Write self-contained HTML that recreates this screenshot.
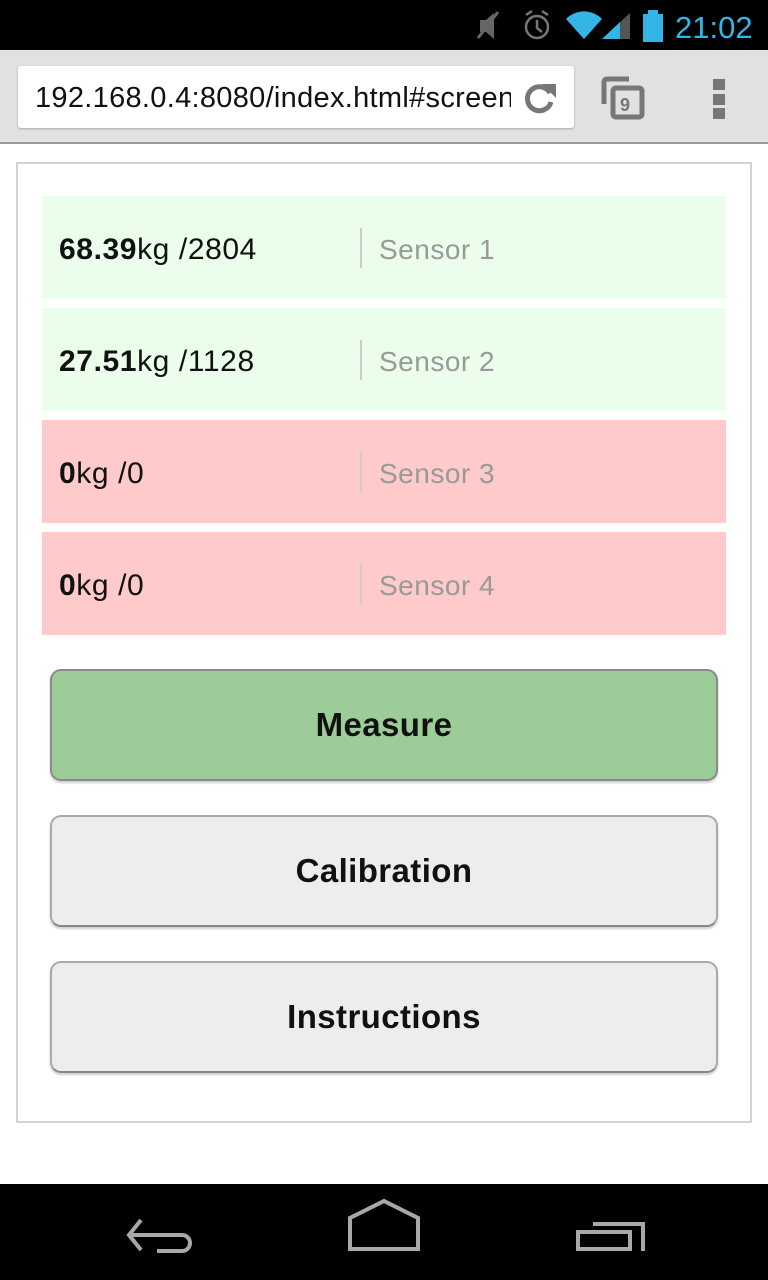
<!DOCTYPE html>
<html><head><style>
*{margin:0;padding:0;box-sizing:border-box}
body{width:768px;height:1280px;position:relative;background:#fff;font-family:"Liberation Sans",sans-serif;overflow:hidden}
.abs{position:absolute}
.row{position:absolute;left:42px;width:684px;height:103px}
.row .v{position:absolute;left:17px;top:2px;line-height:103px;font-size:30px;letter-spacing:0.6px;color:#111}
.row .d{position:absolute;left:318px;top:32px;width:2px;height:40px;background:#ccc}
.row .s{position:absolute;left:337px;top:2px;line-height:103px;font-size:28px;letter-spacing:0.5px;color:#999}
.g{background:#ebfdeb}.r{background:#fecbca}
.btn{position:absolute;left:50px;width:668px;height:112px;border:2px solid #aaa;border-bottom-color:#888;border-radius:11px;background:#ededed;text-align:center;line-height:108px;font-weight:bold;font-size:33px;letter-spacing:0.4px;color:#111;box-shadow:0 2px 2px rgba(0,0,0,.2)}
</style></head><body>
<div class="abs" style="left:0;top:0;width:768px;height:50px;background:#000"></div>
<svg class="abs" style="left:470px;top:6px" width="298" height="40" viewBox="0 0 298 40">
<path d="M10 14h6l8-7v26l-8-7h-6z" fill="#666"/><line x1="8" y1="32" x2="28" y2="6" stroke="#666" stroke-width="3"/>
<circle cx="67" cy="21" r="11" fill="none" stroke="#777" stroke-width="2.5"/><path d="M67 14v8l5 4" stroke="#777" stroke-width="2.5" fill="none"/>
<path d="M56 9l6-4M78 9l-6-4" stroke="#777" stroke-width="2.5"/>
<path d="M96 13a25 25 0 0 1 36 0L114 33z" fill="#33b5e5"/>
<path d="M132 33l28-26v26z" fill="#555"/><path d="M132 33l18-17v17z" fill="#33b5e5"/>
<rect x="173" y="8" width="20" height="28" fill="#33b5e5"/><rect x="178" y="4" width="10" height="4" fill="#33b5e5"/>
<text x="205" y="32" font-family="Liberation Sans" font-size="31" fill="#33b5e5">21:02</text>
</svg>
<div class="abs" style="left:0;top:50px;width:768px;height:94px;background:#e1e1e1;border-bottom:2px solid #9a9a9a"></div>
<div class="abs" style="left:18px;top:66px;width:556px;height:62px;background:#fff;border-radius:3px;box-shadow:0 1px 2px rgba(0,0,0,.25);overflow:hidden">
<div style="position:absolute;left:17px;top:1px;line-height:62px;font-size:29px;letter-spacing:0.3px;color:#111;white-space:nowrap;width:476px;overflow:hidden">192.168.0.4:8080/index.html#screen</div>
<svg style="position:absolute;left:504px;top:14px" width="36" height="36" viewBox="0 0 36 36"><path d="M28 13A12 12 0 1 0 29 22" fill="none" stroke="#777" stroke-width="5"/><path d="M20 4h14v14z" fill="#777"/></svg>
</div>
<svg class="abs" style="left:598px;top:74px" width="52" height="48" viewBox="0 0 52 48"><path d="M6 30V8a3 3 0 0 1 3-3h22" fill="none" stroke="#777" stroke-width="5"/><rect x="15" y="14" width="29" height="29" rx="3" fill="none" stroke="#777" stroke-width="5"/><text x="22" y="37" font-family="Liberation Sans" font-weight="bold" font-size="18" fill="#777">9</text></svg>
<div class="abs" style="left:713px;top:79px;width:12px;height:11px;background:#777"></div>
<div class="abs" style="left:713px;top:94px;width:12px;height:11px;background:#777"></div>
<div class="abs" style="left:713px;top:108px;width:12px;height:11px;background:#777"></div>
<div class="abs" style="left:16px;top:162px;width:736px;height:961px;border:2px solid #d4d4d4"></div>
<div class="row g" style="top:196px"><div class="v"><b>68.39</b>kg /2804</div><div class="d"></div><div class="s">Sensor 1</div></div>
<div class="row g" style="top:308px"><div class="v"><b>27.51</b>kg /1128</div><div class="d"></div><div class="s">Sensor 2</div></div>
<div class="row r" style="top:420px"><div class="v"><b>0</b>kg /0</div><div class="d"></div><div class="s">Sensor 3</div></div>
<div class="row r" style="top:532px"><div class="v"><b>0</b>kg /0</div><div class="d"></div><div class="s">Sensor 4</div></div>
<div class="btn" style="top:669px;background:#9ccc98;border-color:#8a8a8a">Measure</div>
<div class="btn" style="top:815px">Calibration</div>
<div class="btn" style="top:961px">Instructions</div>
<div class="abs" style="left:0;top:1184px;width:768px;height:96px;background:#000"></div>
<svg class="abs" style="left:0;top:1184px" width="768" height="96" viewBox="0 0 768 96">
<g fill="none" stroke="#a8a8a8" stroke-width="4">
<path d="M141 36l-12 15 12 15M129 51h53a8 8 0 0 1 0 16h-25"/>
<path d="M350 65V34l34-17 34 17v31z"/>
<path d="M578 65V48h52v17zM593 40h50v27"/>
</g></svg>
</body></html>
